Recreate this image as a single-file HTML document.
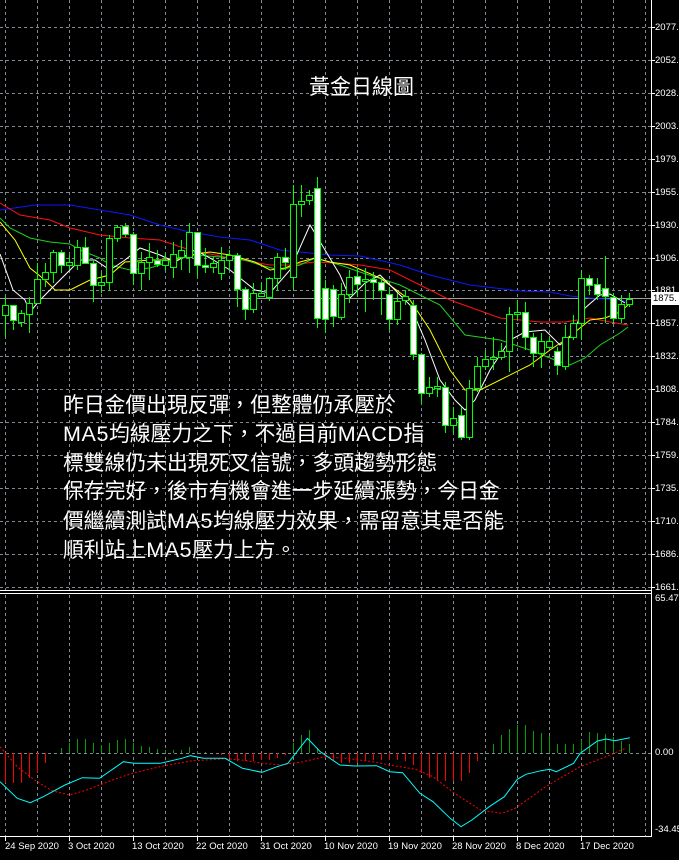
<!DOCTYPE html>
<html><head><meta charset="utf-8">
<style>
html,body{margin:0;padding:0;background:#000;}
body{width:679px;height:860px;overflow:hidden;position:relative;font-family:"Liberation Sans","Noto Sans CJK TC",sans-serif;}
svg{position:absolute;left:0;top:0;}
.t{position:absolute;color:#fff;white-space:nowrap;}
.t b{font-weight:normal;font-size:21.5px;letter-spacing:0.6px;}
.lbl{position:absolute;left:655px;font-size:9.5px;color:#fff;font-family:"Liberation Sans",sans-serif;}
.dt{position:absolute;top:841px;font-size:9.5px;color:#fff;font-family:"Liberation Sans",sans-serif;}
</style></head><body>
<svg id="s" width="679" height="860" viewBox="0 0 679 860"></svg>
<div class="t" style="left:309px;top:71px;font-size:21px;">黃金日線圖</div>
<div class="t" style="left:63px;top:392px;font-size:20.8px;line-height:28.4px;">昨日金價出現反彈，但整體仍承壓於<br><b>MA5</b>均線壓力之下，不過目前<b>MACD</b>指<br>標雙線仍未出現死叉信號，多頭趨勢形態<br>保存完好，後市有機會進一步延續漲勢，今日金<br>價繼續測試<b>MA5</b>均線壓力效果，需留意其是否能<br>順利站上<b>MA5</b>壓力上方。</div>
<div class="lbl" style="top:22px">2077.</div>
<div class="lbl" style="top:55px">2052.</div>
<div class="lbl" style="top:88px">2028.</div>
<div class="lbl" style="top:121px">2003.</div>
<div class="lbl" style="top:154px">1979.</div>
<div class="lbl" style="top:187px">1955.</div>
<div class="lbl" style="top:220px">1930.</div>
<div class="lbl" style="top:253px">1906.</div>
<div class="lbl" style="top:285px">1881.</div>
<div class="lbl" style="top:318px">1857.</div>
<div class="lbl" style="top:351px">1832.</div>
<div class="lbl" style="top:384px">1808.</div>
<div class="lbl" style="top:417px">1784.</div>
<div class="lbl" style="top:450px">1759.</div>
<div class="lbl" style="top:483px">1735.</div>
<div class="lbl" style="top:516px">1710.</div>
<div class="lbl" style="top:549px">1686.</div>
<div class="lbl" style="top:582px">1661.</div>
<div class="lbl" style="top:593px">65.47</div>
<div class="lbl" style="top:747px">0.00</div>
<div class="lbl" style="top:824px">-34.45</div>
<div class="lbl" style="top:292px;left:652px;width:27px;height:13px;line-height:13px;background:#fff;color:#000;padding-left:1px">1875.</div>
<div class="dt" style="left:5px">24 Sep 2020</div>
<div class="dt" style="left:68px">3 Oct 2020</div>
<div class="dt" style="left:132px">13 Oct 2020</div>
<div class="dt" style="left:196px">22 Oct 2020</div>
<div class="dt" style="left:260px">31 Oct 2020</div>
<div class="dt" style="left:324px">10 Nov 2020</div>
<div class="dt" style="left:388px">19 Nov 2020</div>
<div class="dt" style="left:452px">28 Nov 2020</div>
<div class="dt" style="left:516px">8 Dec 2020</div>
<div class="dt" style="left:580px">17 Dec 2020</div>
<script>
var s=document.getElementById('s'),h='';
var G='#7f8a94';
for(var x=5.5;x<651;x+=32){h+='<line x1="'+x+'" y1="0" x2="'+x+'" y2="590" stroke="'+G+'" stroke-dasharray="3,3"/>';
h+='<line x1="'+x+'" y1="595" x2="'+x+'" y2="836" stroke="'+G+'" stroke-dasharray="3,3"/>';}
var ys=[27,60,93,126,159,192,225,258,290,323,356,389,422,455,488,521,554,587];
ys.forEach(function(y){h+='<line x1="0" y1="'+(y+.5)+'" x2="651" y2="'+(y+.5)+'" stroke="'+G+'" stroke-dasharray="3,3"/>';h+='<line x1="651" y1="'+(y+.5)+'" x2="655" y2="'+(y+.5)+'" stroke="#fff"/>';});
h+='<line x1="0" y1="753.5" x2="651" y2="753.5" stroke="'+G+'" stroke-dasharray="3,3"/>';
h+='<line x1="0" y1="298.5" x2="651" y2="298.5" stroke="#a0a0a0"/>';
h+='<line x1="651.5" y1="0" x2="651.5" y2="837" stroke="#fff"/>';
h+='<line x1="0" y1="590.5" x2="652" y2="590.5" stroke="#fff"/>';
h+='<line x1="0" y1="593.5" x2="652" y2="593.5" stroke="#fff"/>';
h+='<line x1="0" y1="836.5" x2="652" y2="836.5" stroke="#fff"/>';
for(var i=0;i<10;i++){var tx=5.5+64*i;h+='<line x1="'+tx+'" y1="837" x2="'+tx+'" y2="841" stroke="#fff"/>';}
function pl(pts,c,dash){return '<polyline fill="none" stroke="'+c+'" stroke-width="1"'+(dash?' stroke-dasharray="2,2"':'')+' points="'+pts+'"/>';}
h+=pl('0,210 35,205 70,205 100,210 130,215 160,225 190,232 220,237 250,240 280,250 310,253 330,255 360,256 400,265 430,275 470,285 520,291 550,292 570,296 590,298 620,300 628,302','#0a18ff');
h+=pl('0,203 20,215 50,220 70,228 100,235 130,238 160,240 190,250 230,258 270,265 290,265 315,262 335,263 360,265 390,270 420,285 450,300 500,318 540,322 565,322 590,318 610,322 628,325','#ff1010');
h+=pl('0,218 10,228 30,238 50,242 70,244 80,250 100,258 110,265 130,270 150,268 175,260 195,255 220,257 245,260 260,265 280,270 300,265 315,258 340,265 360,272 400,285 440,305 465,335 500,340 530,350 555,360 570,365 585,358 600,345 620,333 628,327','#20d020');
h+=pl('0,222 15,240 30,268 45,280 55,290 70,290 90,280 110,275 125,262 150,260 170,260 190,255 210,252 230,255 255,262 270,270 285,268 300,262 315,258 330,262 350,265 380,278 410,300 430,330 450,370 465,390 480,390 500,380 530,365 550,350 565,340 590,320 605,318 620,312 628,305','#ffff00');
h+=pl('0,254 13,290 25,300 30,312 40,300 60,280 80,260 95,260 110,270 125,260 140,248 160,255 175,262 195,250 210,258 230,270 255,290 270,293 290,270 310,225 325,250 340,275 350,298 365,283 380,275 400,295 410,305 425,340 440,380 455,400 465,410 475,400 490,370 510,340 525,332 545,330 560,345 570,337 585,308 600,295 610,294 625,303','#ffffff');
var C=[[305,315,297,337,0],[305,320,305,330,1],[313,322,310,327,0],[303,314,297,333,0],[279,303,263,303,0],[272,279,263,287,0],[252,272,250,283,0],[252,265,250,273,1],[262,265,255,270,0],[247,265,240,270,0],[247,263,237,263,1],[263,285,260,302,1],[282,285,273,293,0],[238,282,235,290,0],[227,238,225,242,0],[226,234,223,237,1],[234,273,232,285,1],[262,273,252,290,0],[257,262,243,280,0],[260,264,250,267,1],[260,265,253,270,0],[254,267,242,278,0],[250,257,240,270,0],[232,257,223,273,0],[232,265,232,277,1],[265,267,248,273,1],[263,267,257,273,0],[260,273,247,280,0],[255,260,250,270,0],[255,289,253,307,1],[289,309,287,320,1],[293,309,283,313,0],[293,296,283,297,0],[278,297,277,301,0],[257,278,253,290,0],[257,262,248,270,1],[204,277,185,290,0],[201,204,185,217,0],[195,200,190,205,0],[188,318,177,328,1],[288,319,280,333,1],[289,316,285,327,1],[294,317,283,320,0],[277,294,270,303,0],[276,284,268,297,1],[279,280,268,312,0],[279,282,272,300,1],[282,290,277,315,1],[294,319,287,330,1],[301,319,293,325,0],[296,300,290,305,0],[305,354,300,360,1],[354,393,353,403,1],[387,393,377,397,0],[386,388,377,397,0],[387,425,382,433,1],[418,425,407,433,0],[415,437,407,440,1],[388,437,380,440,0],[366,388,357,392,0],[359,366,350,370,0],[357,359,337,370,0],[351,357,343,360,0],[314,351,307,372,0],[312,314,300,320,0],[312,337,302,350,1],[337,353,333,367,1],[341,353,333,368,0],[341,347,337,350,0],[351,365,347,375,1],[337,366,325,370,0],[323,337,315,340,0],[278,323,270,340,0],[278,285,275,295,1],[284,294,278,300,1],[288,296,256,323,1],[297,318,293,323,1],[304,318,295,323,0],[299,304,293,307,0]];
C.forEach(function(c,i){var x=5+8*i;
h+='<line x1="'+(x+.5)+'" y1="'+c[2]+'" x2="'+(x+.5)+'" y2="'+c[3]+'" stroke="#00ff00"/>';
var bh=Math.max(c[1]-c[0],2);
h+='<rect x="'+(x-2.5)+'" y="'+(c[0]+.5)+'" width="6" height="'+bh+'" fill="'+(c[4]?'#fff':'#000')+'" stroke="#00ff00"/>';});
var H=[-30,-30,-30,-25,-20,-10,0,5,10,14,14,10,8,10,13,14,10,7,6,4,3,3,3,6,2,1,0,-2,-5,-8,-8,-8,-7,-7,-5,-2,10,18,23,5,-5,-8,-10,-10,-10,-8,-7,-7,-7,-7,-8,-12,-20,-25,-27,-28,-28,-28,-20,-8,0,9,18,24,28,28,22,20,17,9,9,9,13,21,20,19,16,12,9];
H.forEach(function(v,i){if(!v)return;var x=5.5+8*i;h+='<line x1="'+x+'" y1="753" x2="'+x+'" y2="'+(753-v)+'" stroke="'+(v>0?'#00a000':'#ff0000')+'"/>';});
function conv(a){return a.map(function(p){return (p[0]/2.31).toFixed(1)+','+(580+p[1]/3).toFixed(1)}).join(' ');}
h+=pl(conv([[0,500],[40,560],[80,600],[120,632],[160,645],[200,630],[260,600],[310,578],[380,557],[440,543],[520,536],[560,540],[605,550],[650,555],[700,545],[750,530],[800,535],[860,545],[900,555],[960,568],[1000,590],[1050,640],[1110,690],[1160,700],[1190,685],[1260,620],[1340,560],[1400,530],[1445,505]]),'#ff0000',1);
h+=pl(conv([[0,605],[40,655],[70,668],[100,650],[150,615],[190,593],[230,595],[285,545],[310,550],[370,550],[420,535],[440,527],[470,535],[520,535],[560,565],[605,577],[640,560],[665,550],[710,475],[740,515],[785,555],[820,558],[870,557],[900,575],[930,578],[970,640],[1000,665],[1040,715],[1065,740],[1090,720],[1130,680],[1165,650],[1195,598],[1215,583],[1250,572],[1270,568],[1285,575],[1325,550],[1340,520],[1380,483],[1400,477],[1420,482],[1455,473]]),'#00ffff');
s.innerHTML=h;
</script>
</body></html>
